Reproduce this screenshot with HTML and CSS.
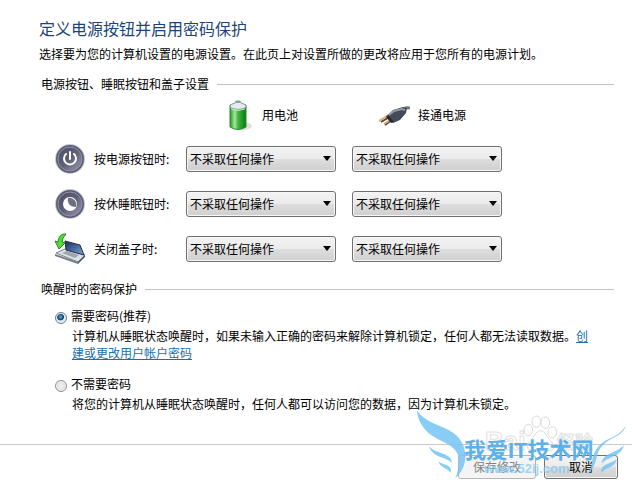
FILE: index.html
```
<!DOCTYPE html>
<html lang="zh-CN">
<head>
    <meta charset="UTF-8">
    <meta name="viewport" content="width=device-width, initial-scale=1.0">
    <title>电源选项</title>
    <link rel="stylesheet" href="styles.css">
</head>
<body>
    <main>
        <h1>定义电源按钮并启用密码保护</h1>
        <p class="intro">选择要为您的计算机设置的电源设置。在此页上对设置所做的更改将应用于您所有的电源计划。</p>

        <section>
            <h2>电源按钮、睡眠按钮和盖子设置</h2>
            <div class="settings">
                <div class="source battery">
                    <svg width="32" height="32" viewBox="0 0 32 32" aria-hidden="true">
                        <defs>
                            <linearGradient id="green">
                                <stop offset="0" stop-color="#239a25"/>
                                <stop offset=".3" stop-color="#a5e89c"/>
                                <stop offset=".5" stop-color="#42b541"/>
                                <stop offset="1" stop-color="#087710"/>
                            </linearGradient>
                        </defs>
                        <ellipse cx="21" cy="27" rx="9" ry="4" fill="#dedede"/>
                        <path d="M8 6q8-4 16 0v22q-8 5-16 0z" fill="url(#green)" stroke="#2c8c30"/>
                        <path d="M8 6l5-2 1-2h4l1 2 5 2-1 3q-7 3-14 0z" fill="#e4ebef" stroke="#94a5aa"/>
                        <ellipse cx="16" cy="3" rx="3" ry="1" fill="#8999a4"/>
                        <path d="M9 10q7 3 14 0" fill="none" stroke="#b8efaf"/>
                    </svg>
                    <span>用电池</span>
                </div>
                <div class="source plugged">
                    <svg width="32" height="32" viewBox="0 0 32 32" aria-hidden="true">
                        <path d="M24 12q2-4 8-3" fill="none" stroke="#73777f" stroke-width="3"/>
                        <path d="M3 23l10-6M7 26l8-6" stroke="#584130" stroke-width="2"/>
                        <path d="M1 22l11-7M6 25l9-6" stroke="#d9ad78" stroke-width="2"/>
                        <path d="M10 16l5-5 10-3 4 1-1 5-6 7-7 3-3-3z" fill="#454a57"/>
                        <path d="M11 16l5-4 8-2 3 1" fill="none" stroke="#9198a6" stroke-width="2"/>
                        <path d="M10 16l6 7-3 1-5-6z" fill="#242832"/>
                    </svg>
                    <span>接通电源</span>
                </div>

                <svg width="32" height="32" viewBox="0 0 32 32" aria-hidden="true">
                    <defs>
                        <linearGradient id="disc" x2="1" y2="1">
                            <stop offset="0" stop-color="#4c4d63"/>
                            <stop offset=".5" stop-color="#5f6077"/>
                            <stop offset="1" stop-color="#a0a1b5"/>
                        </linearGradient>
                    </defs>
                    <circle cx="16" cy="16" r="15" fill="#c5c7d2"/>
                    <circle cx="16" cy="16" r="13" fill="url(#disc)" stroke="#5d5e76" stroke-width="2"/>
                    <circle cx="16" cy="16" r="12" fill="none" stroke="#9192a6"/>
                    <path d="M12 11a6 6 0 1 0 8 0M16 9v7" fill="none" stroke="#fff" stroke-width="2" stroke-linecap="round"/>
                </svg>
                <span id="power">按电源按钮时:</span>
                <select aria-labelledby="power"><option>不采取任何操作</option></select>
                <select aria-labelledby="power"><option>不采取任何操作</option></select>

                <svg width="32" height="32" viewBox="0 0 32 32" aria-hidden="true">
                    <circle cx="16" cy="16" r="15" fill="#c5c7d2"/>
                    <circle cx="16" cy="16" r="13" fill="url(#disc)" stroke="#5d5e76" stroke-width="2"/>
                    <circle cx="16" cy="16" r="12" fill="none" stroke="#9192a6"/>
                    <circle cx="16" cy="16" r="7" fill="#fff"/>
                    <path d="M14 10a7 7 0 0 1 8 9q-5 0-7-3t-1-6z" fill="#6d6e83"/>
                </svg>
                <span id="sleep">按休睡眠钮时:</span>
                <select aria-labelledby="sleep"><option>不采取任何操作</option></select>
                <select aria-labelledby="sleep"><option>不采取任何操作</option></select>

                <svg width="32" height="32" viewBox="0 0 32 32" aria-hidden="true">
                    <defs>
                        <linearGradient id="screen" x2="1" y2="1">
                            <stop offset="0" stop-color="#152c62"/>
                            <stop offset="1" stop-color="#7ba6d9"/>
                        </linearGradient>
                    </defs>
                    <path d="M2 20l9-4 20 6-7 7z" fill="#dce1e7" stroke="#7d858d"/>
                    <path d="M1 21l23 8v2L1 23z" fill="#747c86"/>
                    <path d="M24 29l7-7v2l-7 7z" fill="#4f5862"/>
                    <path d="M11 8l15 4 4 10-18-5z" fill="url(#screen)" stroke="#222d42"/>
                    <path d="M8 20l5-2 12 4-4 3z" fill="#9da6b0"/>
                    <path d="M12 1Q5 0 4 9L1 8l4 8 6-6-3-1q0-4 4-8z" fill="#53dc3c" stroke="#21861c"/>
                </svg>
                <span id="lid">关闭盖子时:</span>
                <select aria-labelledby="lid"><option>不采取任何操作</option></select>
                <select aria-labelledby="lid"><option>不采取任何操作</option></select>
            </div>
        </section>

        <section>
            <h2>唤醒时的密码保护</h2>
            <div class="choice">
                <input type="radio" name="password" id="need" checked>
                <label for="need">需要密码(推荐)</label>
                <p>计算机从睡眠状态唤醒时，如果未输入正确的密码来解除计算机锁定，任何人都无法读取数据。<a href="#">创建或更改用户帐户密码</a></p>
            </div>
            <div class="choice">
                <input type="radio" name="password" id="noneed">
                <label for="noneed">不需要密码</label>
                <p>将您的计算机从睡眠状态唤醒时，任何人都可以访问您的数据，因为计算机未锁定。</p>
            </div>
        </section>
    </main>

    <footer>
        <button class="save" disabled>保存修改</button>
        <button>取消</button>
        <div class="watermark">
            <span class="baidu">Bai</span>
            <span class="jingyan">经验</span>
            <svg viewBox="0 0 666 249" aria-hidden="true">
                <g fill="none" stroke="#d9d9d9" stroke-width="3">
                    <ellipse cx="355" cy="87" rx="13" ry="17"/>
                    <ellipse cx="379" cy="62" rx="13" ry="17"/>
                    <ellipse cx="406" cy="65" rx="13" ry="17"/>
                    <ellipse cx="427" cy="94" rx="13" ry="17"/>
                    <path d="M391 89c-15 0-20 24-32 33-18 17 0 33 32 27 35 7 51-9 34-26-14-12-18-34-34-34z"/>
                </g>
                <g fill="#74c3f5" fill-opacity=".85">
                    <path d="M20 28c20 28 47 38 82 52 39 16 62 43 64 82 1 27-9 50-30 70 12-31 15-56 5-76-12-22-36-30-62-44C45 94 25 66 20 28z"/>
                    <path d="M56 136c18 16 31 17 47 24 15 6 22 14 23 25-11-9-20-11-33-16-17-6-29-15-37-33z"/>
                    <path d="M84 181c11 9 23 9 32 15 7 5 8 11 6 19-8-12-29-13-38-34z"/>
                    <path d="M648 73c-12 22-31 32-53 42-26 12-42 31-47 59-3 21-8 36-20 48 22-15 27-34 33-58 6-22 20-37 41-49 21-11 40-19 46-42z"/>
                    <path d="M642 133c-13 13-28 18-44 25-14 7-22 16-23 29 10-10 19-14 33-20 18-7 29-16 34-34z"/>
                    <path d="M620 175c-11 9-23 12-34 17-10 6-14 14-13 24 9-10 17-13 28-18 11-6 17-12 19-23z"/>
                </g>
            </svg>
            <span class="site">我爱IT技术网</span>
            <span class="url">www.52ij.com</span>
        </div>
    </footer>
</body>
</html>
```
FILE: styles.css
```
* {
    box-sizing: border-box;
}
body {
    margin: 0;
    background: #fff;
    color: #000;
    font-family: "Noto Sans CJK SC", sans-serif;
    font-size: 12px;
    line-height: 18px;
}
main {
    padding: 16px 18px 0 39px;
}
h1 {
    margin: 0;
    color: #1c437c;
    font-size: 16px;
    font-weight: normal;
    line-height: 24px;
}
p {
    margin: 0;
}
.intro {
    margin: 5px 0 12px;
}
h2 {
    display: flex;
    align-items: center;
    gap: 8px;
    margin: 0 0 0 2px;
    font-size: 12px;
    font-weight: normal;
}
h2::after {
    content: "";
    flex: 1;
    height: 1px;
    background: #c3c3c3;
}

/* power button table */
.settings {
    display: grid;
    grid-template-columns: 32px 84px 150px 150px;
    grid-template-rows: 43px repeat(3, 45px);
    column-gap: 8px;
    align-items: center;
    margin: 0 0 9px 15px;
}
.settings span {
    white-space: nowrap;
}
.source {
    display: flex;
    align-items: center;
    gap: 8px;
}
.battery {
    grid-column: 3;
    padding-left: 36px;
}
.plugged {
    grid-column: 4;
    margin-left: 8px;
    padding-left: 26px;
}
select {
    width: 150px;
    height: 26px;
    padding: 0 20px 0 3px;
    appearance: none;
    border: 1px solid #707070;
    border-radius: 3px;
    background: url("data:image/svg+xml,%3Csvg xmlns='http://www.w3.org/2000/svg' width='8' height='5'%3E%3Cpath d='M0 0h8L4 5z'/%3E%3C/svg%3E") no-repeat right 4px center,
        linear-gradient(#f3f3f3, #ebebeb 48%, #dddddd 52%, #cfcfcf);
    box-shadow: inset 0 0 0 1px #f6f6f6;
    color: #000;
    font: inherit;
}
select + select {
    margin-left: 8px;
}

/* password options */
.choice {
    display: grid;
    grid-template-columns: 13px 1fr;
    column-gap: 3px;
    align-items: center;
    margin: 9px 22px 14px 16px;
}
.choice p {
    grid-column: 2;
    padding-left: 1px;
    margin-top: 2px;
    line-height: 17px;
}
.choice a {
    color: #1a6fae;
}
input[type="radio"] {
    width: 12px;
    height: 12px;
    margin: 4px 0 0;
    appearance: none;
    border: 1px solid #8e8f8f;
    border-radius: 50%;
    background: radial-gradient(#f4f4f4, #cfd3d8);
    box-shadow: inset 0 0 0 1px #f4f4f4;
}
input[type="radio"]:checked {
    border-color: #5b7d9b;
    background: radial-gradient(circle at 45% 40%, #5fb3dc, #123d63 38%, #dce8f0 46%);
}

footer {
    position: relative;
    display: flex;
    justify-content: flex-end;
    gap: 8px;
    margin-top: 32px;
    padding: 10px 14px 5px;
    border-top: 1px solid #c9c9c9;
}
button {
    width: 74px;
    height: 24px;
    padding: 0;
    border: 1px solid #707070;
    border-radius: 3px;
    background: linear-gradient(#f3f3f3, #ebebeb 48%, #dddddd 52%, #cfcfcf);
    box-shadow: inset 0 0 0 1px #f6f6f6;
    color: #000;
    font: inherit;
}
.save {
    width: 78px;
    border-color: #b5b5b5;
    background: #f4f4f4;
    color: #838383;
}

/* site mark over the footer */
.watermark {
    position: absolute;
    right: 0;
    bottom: 0;
    width: 222px;
    height: 83px;
    pointer-events: none;
}
.watermark svg {
    position: absolute;
    inset: 0;
}
.watermark span {
    position: absolute;
    white-space: nowrap;
}
.baidu,
.jingyan {
    top: 28px;
    color: #fff;
    font-size: 18px;
    font-weight: bold;
    line-height: 24px;
    opacity: .8;
    -webkit-text-stroke: 1px #d9d9d9;
}
.baidu {
    left: 75px;
    font-family: "Liberation Sans", sans-serif;
    font-size: 26px;
}
.jingyan {
    left: 147px;
}
.site {
    top: 38px;
    left: 54px;
    color: #5db1ea;
    font-family: "Liberation Sans", "Noto Sans CJK SC", sans-serif;
    font-size: 22px;
    font-weight: bold;
    line-height: 24px;
}
.url {
    top: 60px;
    left: 74px;
    color: #7cc6f5;
    font-family: "Liberation Sans", sans-serif;
    font-size: 13px;
    font-weight: bold;
    line-height: 16px;
    opacity: .7;
}
```
